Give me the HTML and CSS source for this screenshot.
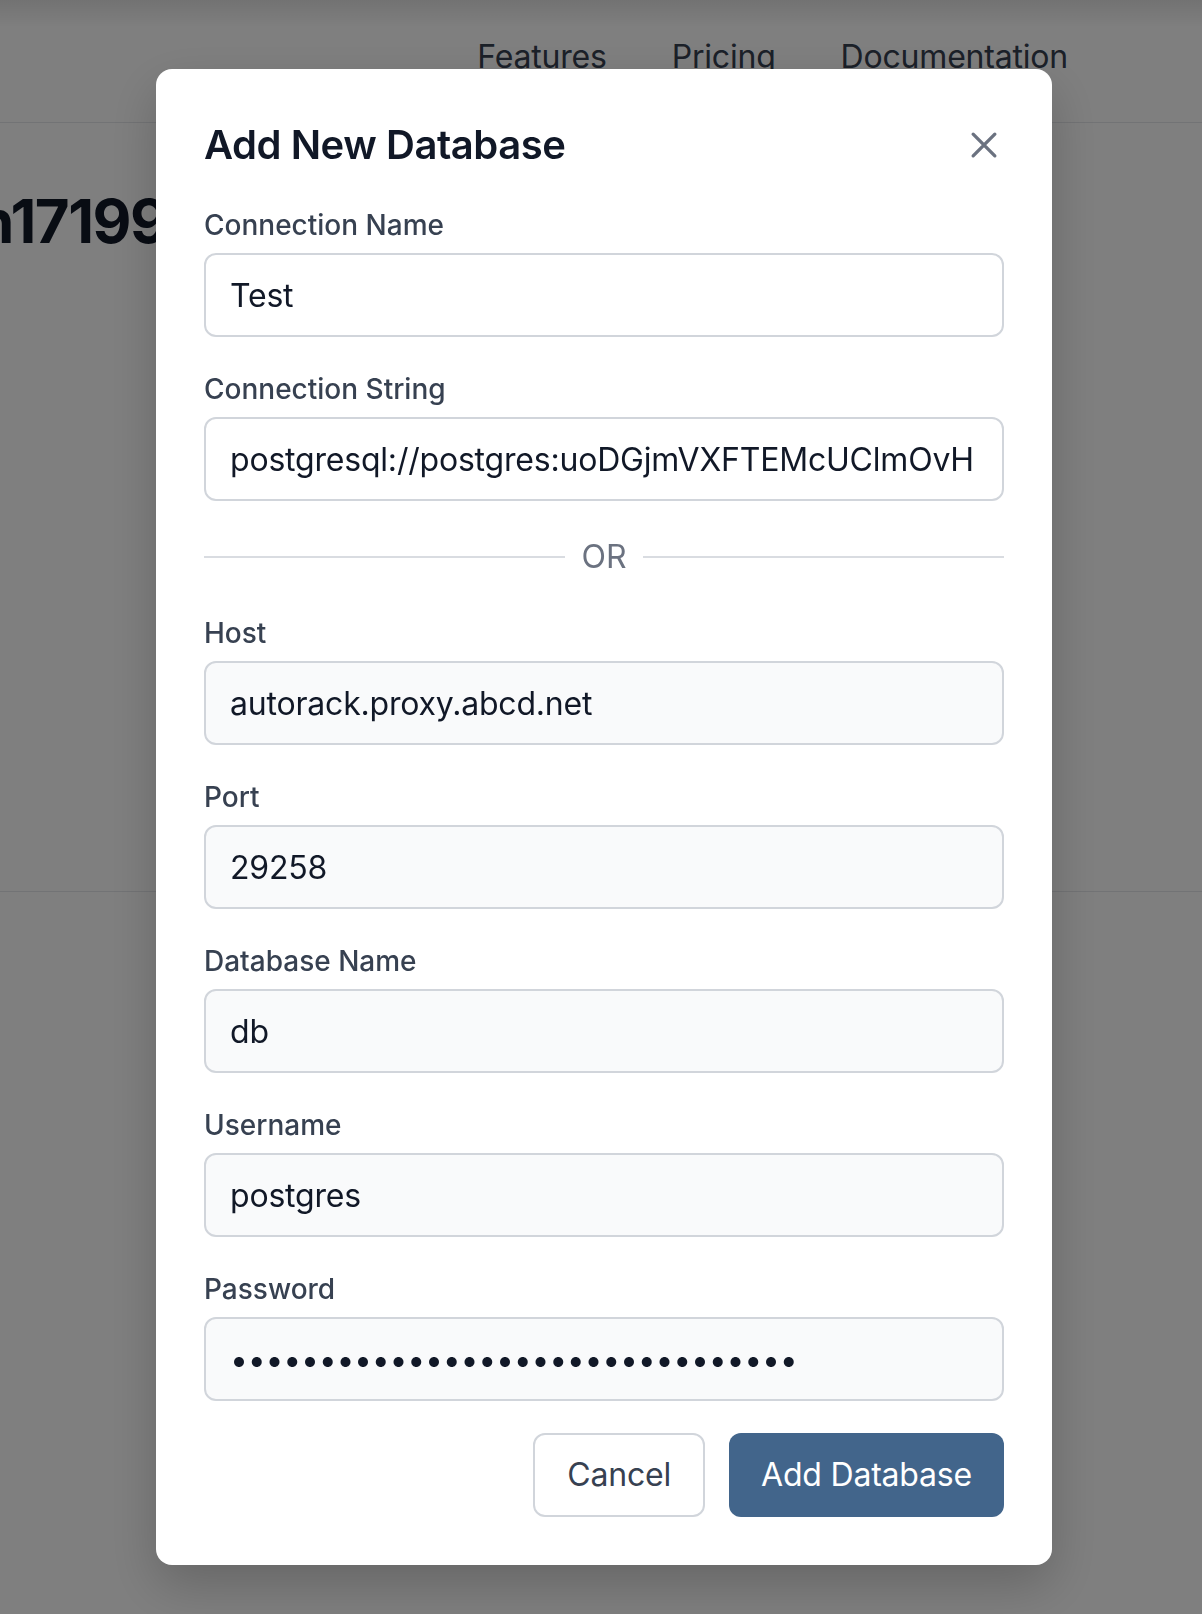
FILE: index.html
```html
<!DOCTYPE html>
<html lang="en">
<head>
<meta charset="utf-8">
<title>Add New Database</title>
<link rel="stylesheet" href="styles.css">
</head>
<body>
  <header class="site-header">
    <nav class="nav">
      <a class="nav-link" href="#">Features</a>
      <a class="nav-link" href="#">Pricing</a>
      <a class="nav-link" href="#">Documentation</a>
    </nav>
  </header>
  <main class="hero">
    <h1 class="hero-title">n17199</h1>
  </main>
  <section class="lower"></section>

  <div class="overlay">
    <div class="modal">
      <div class="modal-head">
        <h2 class="modal-title">Add New Database</h2>
        <button class="close-btn" type="button" aria-label="Close">
          <svg class="close-icon" viewBox="0 0 24 24" fill="none" stroke="currentColor" stroke-width="2" stroke-linecap="round">
            <path d="M5.5 18.5L18.5 5.5M5.5 5.5l13 13"/>
          </svg>
        </button>
      </div>
      <form class="form">
        <div class="field">
          <label class="label">Connection Name</label>
          <input class="input" type="text" value="Test">
        </div>
        <div class="field">
          <label class="label">Connection String</label>
          <input class="input input-long" type="text" value="postgresql://postgres:uoDGjmVXFTEMcUClmOvHnrKqWbTsYpZa@autorack.proxy.abcd.net:29258/db">
        </div>
        <div class="divider">
          <span class="divider-line"></span>
          <span class="divider-text">OR</span>
          <span class="divider-line"></span>
        </div>
        <div class="field">
          <label class="label">Host</label>
          <input class="input input-muted" type="text" value="autorack.proxy.abcd.net">
        </div>
        <div class="field">
          <label class="label">Port</label>
          <input class="input input-muted" type="text" value="29258">
        </div>
        <div class="field">
          <label class="label">Database Name</label>
          <input class="input input-muted" type="text" value="db">
        </div>
        <div class="field">
          <label class="label">Username</label>
          <input class="input input-muted" type="text" value="postgres">
        </div>
        <div class="field">
          <label class="label">Password</label>
          <input class="input input-muted input-password" type="password" value="uoDGjmVXFTEMcUClmOvHnrKqWbTsYpZa">
        </div>
        <div class="actions">
          <button class="btn btn-secondary" type="button">Cancel</button>
          <button class="btn btn-primary" type="button">Add Database</button>
        </div>
      </form>
    </div>
  </div>
</body>
</html>
```
FILE: styles.css
```css
* {
  box-sizing: border-box;
}

html, body {
  margin: 0;
  padding: 0;
}

body {
  font-family: Inter, "Noto Sans", "Liberation Sans", sans-serif;
  background: #ffffff;
  color: #111827;
  min-height: 1614px;
  overflow: hidden;
}

.site-header {
  height: 123px;
  border-bottom: 1px solid #e5e7eb;
  background: linear-gradient(to bottom, rgba(0, 0, 0, 0.1), rgba(0, 0, 0, 0) 28px), #ffffff;
  display: flex;
  align-items: center;
  justify-content: flex-end;
  padding-right: 134px;
  padding-bottom: 8px;
}

.nav {
  display: flex;
  gap: 65px;
}

.nav-link {
  font-size: 32px;
  line-height: 48px;
  color: #374151;
  text-decoration: none;
  letter-spacing: -0.2px;
}

.hero {
  height: 769px;
  border-bottom: 1px solid #e5e7eb;
  padding-top: 62px;
  overflow: hidden;
}

.hero-title {
  margin: 0 0 0 -23px;
  font-size: 60px;
  line-height: 72px;
  font-weight: 700;
  letter-spacing: -1.5px;
  color: #111827;
}

.lower {
  height: 700px;
}

.overlay {
  position: fixed;
  inset: 0;
  background: rgba(0, 0, 0, 0.5);
  display: flex;
  align-items: flex-start;
  padding-top: 69px;
  padding-left: 156px;
}

.modal {
  width: 896px;
  background: #ffffff;
  border-radius: 16px;
  padding: 48px;
  box-shadow: 0 20px 50px rgba(0, 0, 0, 0.2);
}

.modal-head {
  display: flex;
  align-items: center;
  justify-content: space-between;
  height: 56px;
  margin-bottom: 32px;
}

.modal-title {
  margin: 0;
  font-size: 40px;
  line-height: 56px;
  font-weight: 600;
  letter-spacing: -0.45px;
  color: #111827;
}

.close-btn {
  border: 0;
  background: none;
  padding: 0;
  width: 40px;
  height: 40px;
  color: #6b7280;
  display: flex;
  align-items: center;
  justify-content: center;
}

.close-icon {
  width: 40px;
  height: 40px;
}

.form {
  display: flex;
  flex-direction: column;
  gap: 32px;
}

.field {
  display: flex;
  flex-direction: column;
}

.label {
  font-size: 28px;
  line-height: 40px;
  font-weight: 500;
  color: #374151;
  margin-bottom: 8px;
}

.input {
  width: 100%;
  height: 84px;
  padding: 0 24px;
  border: 2px solid #d1d5db;
  border-radius: 12px;
  background: #ffffff;
  font-family: Inter, "Noto Sans", "Liberation Sans", sans-serif;
  font-size: 32px;
  letter-spacing: -0.2px;
  color: #111827;
  outline: none;
}

.input-long {
  padding-right: 26px;
}

.input-muted {
  background: #f9fafb;
}

.input-password {
  letter-spacing: -0.27px;
}

.divider {
  height: 48px;
  display: flex;
  align-items: center;
}

.divider-line {
  flex: 1;
  height: 2px;
  background: #d9dce1;
}

.divider-text {
  padding: 0 16px;
  font-size: 32px;
  line-height: 40px;
  color: #6b7280;
}

.actions {
  display: flex;
  justify-content: flex-end;
  gap: 24px;
}

.btn {
  height: 84px;
  padding: 0 32px;
  border-radius: 12px;
  font-family: Inter, "Noto Sans", "Liberation Sans", sans-serif;
  font-size: 32px;
  line-height: 48px;
  font-weight: 400;
  letter-spacing: -0.2px;
}

.btn-secondary {
  background: #ffffff;
  border: 2px solid #d1d5db;
  color: #374151;
}

.btn-primary {
  background: #42658b;
  border: 0;
  color: #ffffff;
}
```
